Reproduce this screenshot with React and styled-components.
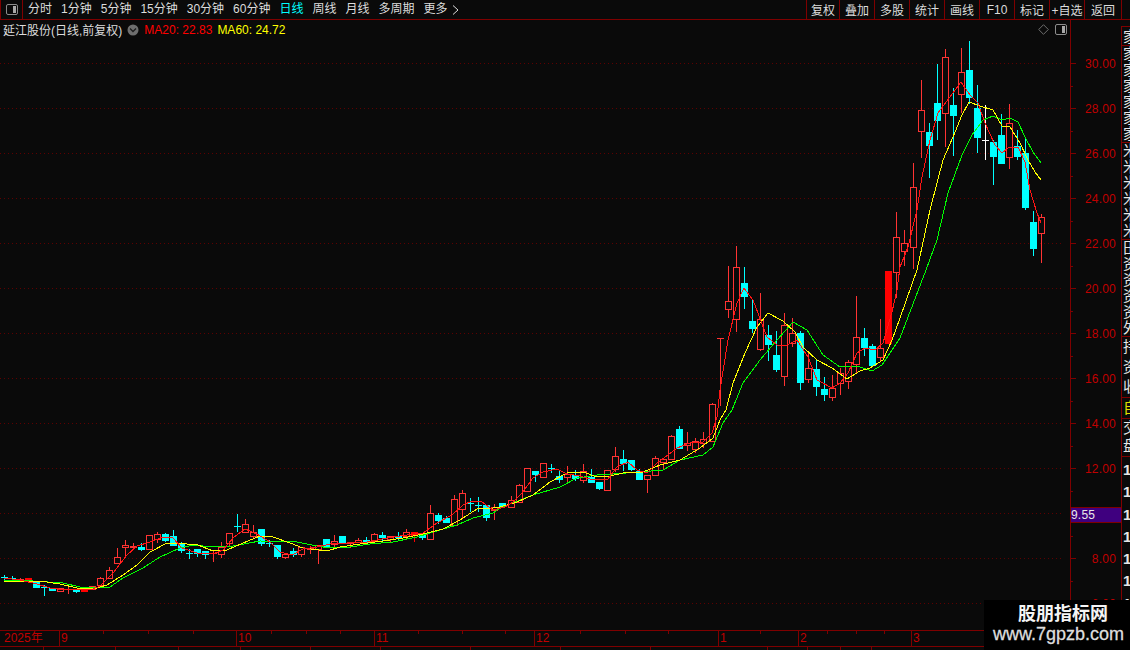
import React from 'react'
import styled, { createGlobalStyle } from 'styled-components'

const BG = '#0a0a0a'
const LINE = '#7f0000'
const AXIS = '#c00000'
const FONT = '"Liberation Sans", "Noto Sans CJK SC", sans-serif'

const GlobalStyle = createGlobalStyle`
  html, body {
    margin: 0;
    padding: 0;
    height: 100%;
    overflow: hidden;
    background: ${BG};
    font-family: ${FONT};
  }
`

const Page = styled.div`
  width: 1130px;
  height: 650px;
  display: flex;
  flex-direction: column;
  position: relative;
  overflow: hidden;
  background: ${BG};
`
const Toolbar = styled.div`
  height: 19px;
  flex: none;
  display: flex;
  justify-content: space-between;
  border-bottom: 1px solid ${LINE};
`
const ToolGroup = styled.div`
  display: flex;
  align-items: center;
  gap: ${(p) => p.$gap || 0}px;
`
const LayoutButton = styled.div`
  width: 23px;
  height: 19px;
  display: flex;
  align-items: center;
  justify-content: center;
  border-left: 1px solid ${LINE};
  border-right: 1px solid ${LINE};
  box-sizing: border-box;
  margin-right: -4px;
`
const ToolItem = styled.span`
  display: flex;
  align-items: center;
  gap: 4px;
  font-size: 12px;
  line-height: 19px;
  white-space: nowrap;
  color: ${(p) => (p.$active ? '#00ffff' : '#dcdcdc')};
`
const RightButton = styled.div`
  width: ${(p) => p.$w}px;
  height: 19px;
  display: flex;
  align-items: center;
  justify-content: center;
  box-sizing: border-box;
  border-left: 1px solid ${LINE};
  font-size: 12px;
  color: #dcdcdc;
  white-space: nowrap;
  &:last-child {
    border-right: 1px solid ${LINE};
    margin-right: 8px;
  }
`
const Body = styled.div`
  flex: 1;
  display: flex;
  min-height: 0;
`
const ChartColumn = styled.div`
  width: 1121px;
  flex: none;
  display: flex;
  flex-direction: column;
`
const ChartArea = styled.div`
  position: relative;
  height: 610px;
  flex: none;
`
const ChartSvg = styled.svg`
  display: block;
`
const AxisText = styled.text`
  font-family: ${FONT};
  font-size: 12px;
  letter-spacing: 0.2px;
  fill: ${AXIS};
`
const Legend = styled.div`
  position: absolute;
  top: 0;
  left: 0;
  width: 1070px;
  height: 19px;
  padding: 0 3px;
  box-sizing: border-box;
  display: flex;
  align-items: center;
  font-size: 12px;
  white-space: nowrap;
`
const StockName = styled.span`
  color: #dcdcdc;
  margin-right: 5px;
`
const MaValue = styled.span`
  color: ${(p) => p.$color};
  margin-left: 5px;
`
const LegendTools = styled.div`
  margin-left: auto;
  display: flex;
  align-items: center;
  gap: 6px;
`
const PriceTag = styled.div`
  position: absolute;
  left: 1071px;
  top: 487px;
  width: 50px;
  height: 16px;
  background: #3f007f;
  border-top: 1px solid ${LINE};
  border-bottom: 1px solid ${LINE};
  box-sizing: border-box;
  color: #e8e8e8;
  font-size: 12px;
  line-height: 14px;
  letter-spacing: 0.2px;
`
const TimeAxis = styled.div`
  position: relative;
  height: 15px;
  flex: none;
  display: flex;
  border-top: 1px solid ${LINE};
  border-bottom: 1px solid ${LINE};
`
const TimeCell = styled.div`
  width: ${(p) => p.$w}px;
  flex: none;
  box-sizing: border-box;
  border-left: ${(p) => (p.$first ? 'none' : `1px solid ${LINE}`)};
  padding-left: ${(p) => (p.$first ? 4 : 1)}px;
  color: ${AXIS};
  font-size: 12px;
  line-height: 15px;
  white-space: nowrap;
`
const TickLayer = styled.svg`
  position: absolute;
  left: 0;
  top: 0;
`
const BottomBit = styled.svg`
  display: block;
`
const SideStrip = styled.div`
  flex: 1;
  display: flex;
  flex-direction: column;
  border-left: 1px solid ${LINE};
  margin-top: 6px;
  overflow: hidden;
`
const StripCell = styled.div`
  height: ${(p) => p.$h}px;
  flex: none;
  box-sizing: border-box;
  border-top: 1px solid ${LINE};
  padding-left: 1px;
  color: ${(p) => p.$color || '#e6e6e6'};
  font-size: 15px;
  line-height: ${(p) => p.$lh || 16}px;
  white-space: pre-line;
  overflow: hidden;
`
const StripNumber = styled.div`
  height: 22.3px;
  flex: none;
  padding-left: 1px;
  color: #e6e6e6;
  font-size: 15px;
  font-weight: 700;
  line-height: 22px;
`
const Watermark = styled.div`
  position: absolute;
  right: 0;
  bottom: 0;
  width: 146px;
  height: 50px;
  background: #000;
  display: flex;
  flex-direction: column;
  align-items: center;
`
const WatermarkTitle = styled.div`
  color: #f4f4f4;
  font-size: 18px;
  font-weight: 700;
  line-height: 28px;
  margin-left: 12px;
`
const WatermarkUrl = styled.div`
  color: #dedede;
  font-size: 18px;
  line-height: 12px;
  margin-left: 3px;
  -webkit-text-stroke: 0.3px #dedede;
`

// [type, top, bottom, high, low] in screen pixels. r hollow red, f solid red, c cyan, w white
const candles = [
  ['c', 577, 577, 575, 579], ['c', 578, 578, 576, 580], ['r', 579, 579, 578, 581], ['f', 578, 581],
  ['c', 581, 587], ['c', 587, 587, 585, 595], ['c', 588, 590], ['r', 588, 591],
  ['r', 589, 589, 587, 593], ['c', 589, 591, 589, 592], ['f', 588, 591], ['r', 586, 589],
  ['r', 578, 585, 577, 585], ['r', 570, 578, 567, 578], ['r', 557, 563, 548, 563], ['r', 545, 547, 540, 555],
  ['r', 546, 547, 543, 549], ['c', 547, 549, 543, 550], ['r', 535, 549], ['r', 534, 539, 532, 542],
  ['c', 534, 540, 533, 541], ['c', 536, 545, 530, 545], ['c', 543, 550, 542, 552], ['c', 553, 553, 549, 558],
  ['c', 549, 553, 549, 556], ['c', 551, 554, 551, 558], ['r', 553, 553, 551, 561], ['r', 547, 554, 542, 557],
  ['r', 533, 543, 533, 546], ['c', 526, 526, 514, 531], ['r', 524, 532, 519, 532], ['r', 532, 536, 525, 538],
  ['c', 529, 543, 529, 545], ['c', 543, 543, 540, 546], ['c', 545, 556, 545, 558], ['r', 554, 557, 554, 558],
  ['c', 551, 554, 548, 556], ['r', 547, 554, 547, 556], ['r', 548, 549, 546, 553], ['r', 545, 549, 545, 563],
  ['c', 539, 546], ['r', 541, 544, 535, 546], ['c', 536, 542], ['r', 542, 543, 542, 547],
  ['r', 540, 542, 538, 542], ['c', 540, 542, 537, 542], ['r', 534, 541, 533, 543], ['c', 535, 537, 532, 540],
  ['r', 536, 539, 536, 541], ['c', 536, 537, 532, 539], ['r', 532, 536, 529, 539], ['f', 532, 535, 532, 541],
  ['c', 535, 537, 535, 539], ['r', 513, 539, 505, 539], ['c', 515, 520, 513, 523], ['c', 518, 522, 516, 522],
  ['r', 499, 525, 495, 525], ['r', 493, 509, 490, 517], ['c', 503, 503, 498, 511], ['c', 505, 505, 497, 511],
  ['c', 505, 517, 505, 520], ['r', 507, 510, 504, 519], ['c', 503, 506], ['r', 500, 507, 496, 507],
  ['r', 485, 502, 484, 502], ['r', 468, 491], ['c', 471, 474, 471, 481], ['r', 463, 477],
  ['c', 468, 468, 464, 472], ['c', 476, 479, 471, 482], ['r', 474, 477, 466, 482], ['c', 475, 478, 470, 480],
  ['r', 471, 480, 464, 482], ['c', 477, 482, 469, 482], ['c', 482, 488, 482, 489], ['r', 470, 490],
  ['r', 456, 469, 447, 471], ['c', 459, 463, 450, 470], ['c', 460, 469, 460, 470], ['c', 471, 479, 469, 479],
  ['r', 475, 479, 475, 492], ['r', 458, 475, 456, 475], ['r', 459, 462, 459, 468], ['r', 436, 459, 435, 459],
  ['c', 429, 448, 426, 448], ['r', 443, 445, 432, 450], ['r', 441, 449, 438, 452], ['r', 439, 443, 432, 447],
  ['r', 404, 441, 403, 441], ['r', 338, 338, 338, 405], ['r', 301, 309, 266, 317], ['r', 267, 319, 246, 331],
  ['c', 283, 296, 267, 308], ['c', 321, 328, 300, 332], ['r', 319, 349, 293, 350], ['c', 335, 344, 325, 360],
  ['c', 355, 369, 331, 371], ['r', 325, 376, 313, 385], ['r', 333, 343, 318, 346], ['c', 333, 382, 331, 389],
  ['r', 368, 379, 353, 382], ['c', 369, 386, 360, 395], ['c', 389, 394, 377, 400], ['r', 388, 397, 375, 400],
  ['r', 373, 383, 368, 394], ['r', 362, 381, 360, 388], ['r', 337, 364, 296, 373], ['c', 338, 347, 328, 355],
  ['c', 346, 365, 344, 366], ['r', 348, 357, 319, 360], ['f', 271, 343], ['r', 237, 272, 212, 297],
  ['r', 243, 251, 230, 265], ['r', 187, 247, 163, 268], ['r', 110, 131, 80, 157], ['c', 132, 145, 123, 177],
  ['c', 103, 120, 64, 139], ['r', 57, 113, 49, 146], ['c', 105, 115, 88, 155], ['r', 72, 94, 48, 112],
  ['c', 70, 97, 41, 103], ['c', 108, 137, 85, 152], ['w', 140, 140, 105, 159], ['c', 142, 156, 140, 184],
  ['c', 135, 163, 114, 163], ['r', 123, 157, 104, 168], ['c', 146, 156, 130, 159], ['c', 153, 207, 137, 209],
  ['c', 222, 248, 211, 255], ['r', 217, 233, 214, 262],
]

const redLine = '4,578 20,580 37,584 50,588 67,590 93,589 100,586 113,573 127,555 137,546 150,542 163,537 173,538 182,548 197,553 213,554 223,550 233,538 245,529 257,534 270,542 280,552 292,555 303,549 317,547 330,544 347,543 367,542 387,538 407,535 423,533 437,523 452,515 463,505 472,501 482,502 493,510 505,507 513,502 522,493 533,478 543,472 557,469 567,474 580,476 590,479 607,480 617,467 628,462 637,470 647,473 657,463 668,455 677,448 690,443 703,442 712,433 717,417 720,390 728,340 737,303 744,288 753,300 767,337 777,345 785,346 797,340 808,357 817,380 832,388 840,383 848,373 857,353 865,348 875,350 883,343 892,312 897,290 900,267 908,247 917,210 922,177 930,140 938,113 950,97 961,82 970,95 978,103 985,123 995,145 1002,153 1008,148 1018,147 1025,162 1030,190 1037,213 1041,223'
const yellowLine = '4,581 40,581 60,584 77,588 93,589 107,585 123,575 137,565 150,552 167,543 187,544 198,545 213,551 227,550 243,543 260,536 273,537 290,543 303,548 327,551 340,547 360,544 383,541 403,538 423,534 443,529 460,520 477,509 493,508 500,507 517,502 533,495 550,482 567,473 583,472 597,477 610,476 623,473 643,472 660,465 680,460 700,448 713,438 720,420 726,410 733,383 745,353 757,327 768,313 783,321 795,332 803,347 817,360 832,368 847,379 860,371 870,368 883,360 892,340 900,318 917,270 930,210 943,160 953,137 962,115 969,102 980,106 993,110 1002,126 1010,127 1020,143 1028,160 1035,172 1041,180'
const greenLine = '4,580 33,581 63,583 80,587 110,587 123,578 143,568 160,557 180,548 193,545 213,547 233,546 260,541 297,542 317,546 330,548 350,547 370,544 393,542 417,537 440,530 457,525 473,518 493,513 500,508 513,503 533,495 560,487 577,478 597,475 613,474 640,472 663,470 680,460 703,455 713,447 723,423 732,410 743,383 760,360 777,340 793,322 807,330 823,355 840,367 857,366 872,371 882,365 890,353 900,338 926,270 937,240 948,193 962,155 972,135 983,120 993,116 1002,120 1010,118 1018,122 1025,137 1033,152 1041,163'

// the svg starts 20px below the page top
const OFFSET = 20
const shift = (pts) =>
  pts.split(' ').map((p) => {
    const [x, y] = p.split(',')
    return `${x},${y - OFFSET}`
  }).join(' ')

const prices = [30, 28, 26, 24, 22, 20, 18, 16, 14, 12, 10, 8, 6]
const priceY = (p) => 63 + (30 - p) * 22.5 - OFFSET

const COLORS = { r: '#ff3333', f: '#ff0000', c: '#00ffff', w: '#ffffff' }

const Candle = ({ index, data }) => {
  const [type, top, bottom, high = top, low = bottom] = data
  const x = Math.round(4 + index * 8.04)
  const color = COLORS[type]
  const t = top - OFFSET
  const b = bottom - OFFSET
  const hi = high - OFFSET
  const lo = low - OFFSET
  const wick = x + 0.5

  if (top === bottom) {
    return (
      <g stroke={color} shapeRendering="crispEdges">
        <line x1={wick} x2={wick} y1={hi} y2={lo + 1} />
        <line x1={x - 3} x2={x + 4} y1={t + 0.5} y2={t + 0.5} />
      </g>
    )
  }
  if (type === 'r') {
    return (
      <g stroke={color} shapeRendering="crispEdges">
        <line x1={wick} x2={wick} y1={hi} y2={t} />
        <line x1={wick} x2={wick} y1={b} y2={lo + 1} />
        <rect x={x - 2.5} y={t + 0.5} width={6} height={b - t} fill={BG} />
      </g>
    )
  }
  return (
    <g shapeRendering="crispEdges">
      <line x1={wick} x2={wick} y1={hi} y2={lo + 1} stroke={color} />
      <rect x={x - 3} y={t} width={7} height={b - t + 1} fill={color} />
    </g>
  )
}

const Chart = () => (
  <ChartSvg width="1121" height="610" viewBox="0 0 1121 610">
    {prices.map((p) => (
      <line key={p} x1="0" x2="1064" y1={priceY(p) + 0.5} y2={priceY(p) + 0.5} stroke="#5e0000" strokeDasharray="1 3" shapeRendering="crispEdges" />
    ))}
    <line x1="1070.5" x2="1070.5" y1="0" y2="610" stroke={LINE} shapeRendering="crispEdges" />
    {prices.map((p) => (
      <g key={p} shapeRendering="crispEdges" stroke={LINE}>
        <line x1="1071" x2="1076" y1={priceY(p) + 0.5} y2={priceY(p) + 0.5} />
        <line x1="1071" x2="1073" y1={priceY(p) + 23} y2={priceY(p) + 23} />
      </g>
    ))}
    {prices.filter((p) => p !== 10).map((p) => (
      <AxisText key={p} x="1116" y={priceY(p) + 5} textAnchor="end">{p.toFixed(2)}</AxisText>
    ))}
    {candles.map((c, i) => <Candle key={i} index={i} data={c} />)}
    <g fill="none" shapeRendering="crispEdges">
      <polyline points={shift(greenLine)} stroke="#00ff00" />
      <polyline points={shift(yellowLine)} stroke="#ffff00" />
      <polyline points={shift(redLine)} stroke="#ff1414" />
    </g>
  </ChartSvg>
)

const tools = ['分时', '1分钟', '5分钟', '15分钟', '30分钟', '60分钟', '日线', '周线', '月线', '多周期']
const buttons = [['复权', 33], ['叠加', 35], ['多股', 35], ['统计', 35], ['画线', 35], ['F10', 35], ['标记', 35], ['+自选', 35], ['返回', 38]]
const months = [['2025年', 59], ['9', 177], ['10', 138], ['11', 160], ['12', 184], ['1', 80], ['2', 113], ['3', 180]]
const stripTop = [
  ['家', 19, 20],
  ['家\n家\n家\n家\n家\n家', 97],
  ['米\n米\n米\n米\n米\n米', 97],
  ['田\n资\n资\n资\n资\n外', 97],
  ['持\n资\n收', 61, 20],
]

const PanelIcon = ({ size = 12 }) => (
  <svg width={size} height={size - 1} viewBox="0 0 12 11">
    <rect x="0.5" y="0.5" width="11" height="10" rx="1.5" fill="none" stroke="#8c8c8c" />
    <rect x="7" y="2" width="3" height="7" fill="#a8a8a8" />
  </svg>
)

const App = () => (
  <Page>
    <GlobalStyle />
    <Toolbar>
      <ToolGroup $gap={9}>
        <LayoutButton><PanelIcon /></LayoutButton>
        {tools.map((t) => <ToolItem key={t} $active={t === '日线'}>{t}</ToolItem>)}
        <ToolItem>
          更多
          <svg width="7" height="10" viewBox="0 0 7 10">
            <path d="M1 0.5 L6 5 L1 9.5" fill="none" stroke="#dcdcdc" />
          </svg>
        </ToolItem>
      </ToolGroup>
      <ToolGroup>
        {buttons.map(([t, w]) => <RightButton key={t} $w={w}>{t}</RightButton>)}
      </ToolGroup>
    </Toolbar>
    <Body>
      <ChartColumn>
        <ChartArea>
          <Chart />
          <Legend>
            <StockName>延江股份(日线,前复权)</StockName>
            <svg width="12" height="12" viewBox="0 0 12 12">
              <circle cx="6" cy="6" r="5.5" fill="#6e6e6e" />
              <path d="M3 4.5 L6 7.5 L9 4.5" fill="none" stroke="#1c1c1c" strokeWidth="1.3" />
            </svg>
            <MaValue $color="#ff0000">MA20: 22.83</MaValue>
            <MaValue $color="#ffff00">MA60: 24.72</MaValue>
            <LegendTools>
              <svg width="11" height="11" viewBox="0 0 11 11">
                <path d="M5.5 0.7 L10.3 5.5 L5.5 10.3 L0.7 5.5 Z" fill="none" stroke="#6e6e6e" />
              </svg>
              <PanelIcon />
            </LegendTools>
          </Legend>
          <PriceTag>9.55</PriceTag>
        </ChartArea>
        <TimeAxis>
          {months.map(([t, w], i) => <TimeCell key={t} $w={w} $first={i === 0}>{t}</TimeCell>)}
          <TickLayer width="1121" height="3">
            {[103, 148, 193, 271, 306, 340, 418, 462, 505, 580, 625, 668, 760, 827, 856, 884].map((x) => (
              <line key={x} x1={x + 0.5} x2={x + 0.5} y1="0" y2="3" stroke={LINE} />
            ))}
          </TickLayer>
        </TimeAxis>
        <BottomBit width="1121" height="4">
          {[43, 115, 178, 240, 310, 380, 470, 560, 650, 767, 807, 840, 871].map((x) => (
            <line key={x} x1={x + 0.5} x2={x + 0.5} y1="0" y2="4" stroke={LINE} />
          ))}
          <g fill="#d8d8d8">
            <rect x="7" y="3" width="2" height="1" />
            <rect x="11" y="3" width="2" height="1" />
            <rect x="17" y="3" width="4" height="1" />
            <rect x="50" y="3" width="2" height="1" />
          </g>
          <g fill="#00ffff">
            <rect x="846" y="3" width="1" height="1" />
            <rect x="849" y="3" width="4" height="1" />
            <rect x="857" y="3" width="9" height="1" />
          </g>
        </BottomBit>
      </ChartColumn>
      <SideStrip>
        {stripTop.map(([t, h, lh], i) => <StripCell key={i} $h={h} $lh={lh}>{t}</StripCell>)}
        <StripCell $h={21} $lh={20} $color="#e0e000">自</StripCell>
        <StripCell $h={38} $lh={18}>{'交\n盘'}</StripCell>
        <StripCell $h={3} />
        {[0, 1, 2, 3, 4, 5, 6, 7].map((n) => <StripNumber key={n}>1</StripNumber>)}
      </SideStrip>
    </Body>
    <Watermark>
      <WatermarkTitle>股朋指标网</WatermarkTitle>
      <WatermarkUrl>www.7gpzb.com</WatermarkUrl>
    </Watermark>
  </Page>
)

export default App
